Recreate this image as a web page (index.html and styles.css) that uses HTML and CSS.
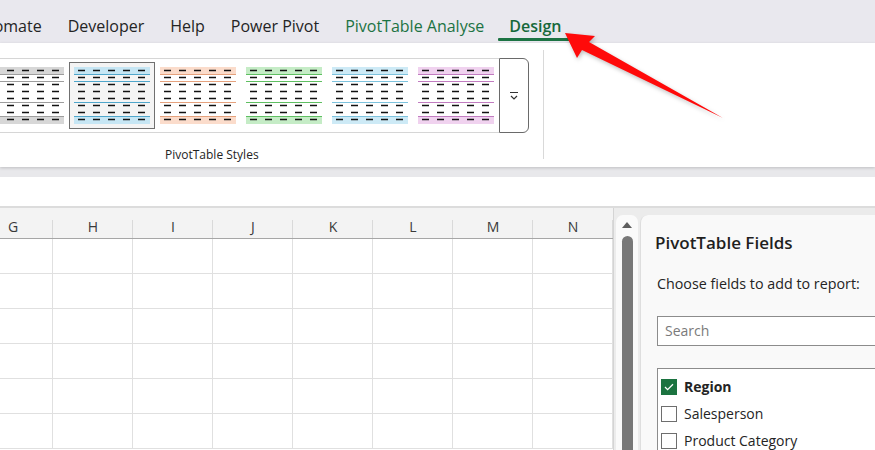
FILE: index.html
```html
<!DOCTYPE html>
<html>
<head>
<meta charset="utf-8">
<link rel="stylesheet" href="styles.css">
</head>
<body>
<svg width="0" height="0" class="defs">
  <symbol id="tstyle" viewBox="0 0 76 57">
    <rect x="0" y="0" width="76" height="7" class="band"/>
    <rect x="0" y="49" width="76" height="8" class="band"/>
    <line x1="0" x2="76" y1="7.5" y2="7.5" class="rule"/>
    <line x1="0" x2="76" y1="14.5" y2="14.5" class="rule"/>
    <line x1="0" x2="76" y1="35.5" y2="35.5" class="rule"/>
    <line x1="0" x2="76" y1="49.5" y2="49.5" class="rule"/>
    <g class="dash">
      <line x1="4" x2="72" y1="3.5" y2="3.5"/>
      <line x1="4" x2="72" y1="10.5" y2="10.5"/>
      <line x1="4" x2="72" y1="17.5" y2="17.5"/>
      <line x1="4" x2="72" y1="24.5" y2="24.5"/>
      <line x1="4" x2="72" y1="31.5" y2="31.5"/>
      <line x1="4" x2="72" y1="38.5" y2="38.5"/>
      <line x1="4" x2="72" y1="45.5" y2="45.5"/>
      <line x1="4" x2="72" y1="52.5" y2="52.5"/>
    </g>
  </symbol>
</svg>
<div class="app">
  <div class="tabs">
    <span class="tab first">Automate</span>
    <span class="tab">Developer</span>
    <span class="tab">Help</span>
    <span class="tab">Power Pivot</span>
    <span class="tab ctx">PivotTable Analyse</span>
    <span class="tab ctx active">Design</span>
  </div>

  <div class="ribbon">
    <div class="group">
      <div class="gallery">
        <div class="items">
          <div class="item"><svg class="thumb s-gray" width="76" height="57"><use href="#tstyle"/></svg></div>
          <div class="item selected"><svg class="thumb s-blue" width="76" height="57"><use href="#tstyle"/></svg></div>
          <div class="item"><svg class="thumb s-orange" width="76" height="57"><use href="#tstyle"/></svg></div>
          <div class="item"><svg class="thumb s-green" width="76" height="57"><use href="#tstyle"/></svg></div>
          <div class="item"><svg class="thumb s-sky" width="76" height="57"><use href="#tstyle"/></svg></div>
          <div class="item"><svg class="thumb s-pink" width="76" height="57"><use href="#tstyle"/></svg></div>
        </div>
        <div class="more">
          <svg width="12" height="10" viewBox="0 0 12 10"><path d="M2 1.5h8M3 5l3 3 3-3" fill="none" stroke="#333" stroke-width="1.2"/></svg>
        </div>
      </div>
      <div class="glabel">PivotTable Styles</div>
    </div>
    <div class="sep"></div>
  </div>

  <div class="band-gap"></div>
  <div class="fbar"></div>

  <div class="main">
    <div class="sheet">
      <div class="grid">
        <div class="ch">G</div><div class="ch">H</div><div class="ch">I</div><div class="ch">J</div><div class="ch">K</div><div class="ch">L</div><div class="ch">M</div><div class="ch">N</div>
        <div class="c"></div><div class="c"></div><div class="c"></div><div class="c"></div><div class="c"></div><div class="c"></div><div class="c"></div><div class="c"></div>
        <div class="c"></div><div class="c"></div><div class="c"></div><div class="c"></div><div class="c"></div><div class="c"></div><div class="c"></div><div class="c"></div>
        <div class="c"></div><div class="c"></div><div class="c"></div><div class="c"></div><div class="c"></div><div class="c"></div><div class="c"></div><div class="c"></div>
        <div class="c"></div><div class="c"></div><div class="c"></div><div class="c"></div><div class="c"></div><div class="c"></div><div class="c"></div><div class="c"></div>
        <div class="c"></div><div class="c"></div><div class="c"></div><div class="c"></div><div class="c"></div><div class="c"></div><div class="c"></div><div class="c"></div>
        <div class="c"></div><div class="c"></div><div class="c"></div><div class="c"></div><div class="c"></div><div class="c"></div><div class="c"></div><div class="c"></div>
      </div>
    </div>
    <div class="vscroll">
      <div class="track">
        <span class="up"></span>
        <div class="sthumb"></div>
      </div>
    </div>
    <div class="pane">
      <div class="ptitle">PivotTable Fields</div>
      <div class="psub">Choose fields to add to report:</div>
      <div class="search">Search</div>
      <div class="fields">
        <div class="field on"><span class="cb"><svg width="10" height="8" viewBox="0 0 10 8"><path d="M1 4l2.6 2.6L9 1.2" fill="none" stroke="#fff" stroke-width="1.3"/></svg></span><span class="fname">Region</span></div>
        <div class="field"><span class="cb"></span><span class="fname">Salesperson</span></div>
        <div class="field"><span class="cb"></span><span class="fname">Product Category</span></div>
      </div>
    </div>
  </div>

  <svg class="arrow" width="875" height="450" viewBox="0 0 875 450">
    <polygon points="565,33 595,36 589,42 723,118 582,50 577,58" fill="#ff0a0a"/>
  </svg>
</div>
</body>
</html>
```

FILE: styles.css
```css
* { box-sizing: border-box; }
html, body { margin: 0; padding: 0; }
body {
  width: 875px;
  height: 450px;
  overflow: hidden;
  font-family: "Open Sans", "Noto Sans", sans-serif;
  color: #242424;
  background: #fff;
}
.defs { position: absolute; }
.app {
  position: relative;
  width: 875px;
  height: 450px;
  overflow: hidden;
  display: flex;
  flex-direction: column;
}

/* tabs */
.tabs {
  height: 43px;
  flex: 0 0 43px;
  background: #e9e8ee;
  display: flex;
  align-items: stretch;
  margin-left: -45px;
  white-space: nowrap;
}
.tab {
  font-size: 16px;
  padding: 16px 13px 0;
  line-height: 20px;
  color: #242424;
  position: relative;
}
.tab.ctx { color: #1c7343; }
.tab.active {
  font-weight: 600;
  color: #16683a;
  padding: 16px 11px 0;
  margin-left: 1px;
}
.tab.active::after {
  content: "";
  position: absolute;
  left: 0;
  right: 0;
  top: 38px;
  height: 3px;
  border-radius: 1px;
  background: #1c7343;
}

/* ribbon */
.ribbon {
  flex: 0 0 124px;
  height: 124px;
  background: #fff;
  display: flex;
  align-items: flex-start;
  box-shadow: 0 1px 3px rgba(0,0,0,.18);
  position: relative;
  z-index: 1;
}
.group {
  display: flex;
  flex-direction: column;
  margin-top: 15px;
  margin-left: -17px;
}
.gallery {
  display: flex;
  height: 75px;
}
.items {
  display: flex;
  border-top: 1px solid #d6d6d6;
  border-bottom: 1px solid #d6d6d6;
  padding-top: 3px;
  height: 75px;
}
.item {
  width: 86px;
  height: 67px;
  padding: 4px;
  border: 1px solid transparent;
}
.item.selected {
  border-color: #707070;
  background: #f4f4f4;
}
.thumb { display: block; }
.band { fill: var(--band); }
.rule { stroke: var(--rule); stroke-width: 1; }
.dash line { stroke: #111; stroke-width: 1.3; stroke-dasharray: 7 8; }
.s-gray { --band: #d7d7d7; --rule: #9d9d9d; }
.s-blue { --band: #c6e6f4; --rule: #4fa6cb; }
.s-orange { --band: #fbdccb; --rule: #e5a17c; }
.s-green { --band: #c5ecc6; --rule: #5ebf61; }
.s-sky { --band: #cdeaf6; --rule: #7cc2dd; }
.s-pink { --band: #f0d2ef; --rule: #c17bc0; }

.more {
  width: 30px;
  height: 75px;
  border: 1px solid #6a6a6a;
  border-radius: 0 6px 6px 0;
  display: flex;
  align-items: center;
  justify-content: center;
  background: #fff;
}
.glabel {
  font-size: 12px;
  color: #242424;
  padding-left: 182px;
  margin-top: 14px;
  line-height: 16px;
}
.sep {
  width: 1px;
  height: 109px;
  background: #d9d9d9;
  margin-top: 7px;
  margin-left: 14px;
}

.band-gap {
  flex: 0 0 10px;
  background: #e8e8eb;
}
.fbar {
  flex: 0 0 31px;
  background: #fff;
  border-bottom: 2px solid #dcdcdc;
}

/* main */
.main {
  flex: 1;
  display: flex;
  background: #ebebeb;
  min-height: 0;
}
.sheet {
  flex: 0 0 613px;
  overflow: hidden;
  background: #fff;
}
.grid {
  margin-left: -27px;
  display: grid;
  grid-template-columns: repeat(8, 80px);
  grid-template-rows: 31px;
  grid-auto-rows: 35px;
  width: 640px;
}
.ch {
  background: #f3f3f3;
  border-bottom: 1px solid #a6a6a6;
  font-size: 14px;
  color: #3a3a3a;
  text-align: center;
  line-height: 16px;
  padding-top: 11px;
  position: relative;
}
.ch::after {
  content: "";
  position: absolute;
  right: 0;
  top: 12px;
  bottom: 0;
  width: 1px;
  background: #d9d9d9;
}
.c {
  border-right: 1px solid #e0e0e0;
  border-bottom: 1px solid #e0e0e0;
}

.vscroll {
  flex: 0 0 27px;
  border-left: 1px solid #d4d4d4;
  padding: 7px 2px 0 2px;
  background: #ececec;
}
.track {
  height: 100%;
  background: #fafafa;
  border-radius: 7px 7px 0 0;
  display: flex;
  flex-direction: column;
  align-items: center;
  padding-top: 7px;
}
.up {
  width: 0;
  height: 0;
  border-left: 5px solid transparent;
  border-right: 5px solid transparent;
  border-bottom: 6px solid #5e5e5e;
}
.sthumb {
  width: 11px;
  flex: 1;
  margin-top: 8px;
  background: #787878;
  border-radius: 6px 6px 0 0;
}

.pane {
  flex: 1;
  margin-top: 7px;
  background: #f9f9f9;
  border-left: 1px solid #dedede;
  border-radius: 8px 0 0 0;
  padding: 16px 0 0 14px;
}
.ptitle {
  font-size: 17px;
  font-weight: 600;
  color: #1f1f1f;
  line-height: 24px;
}
.psub {
  font-size: 14.3px;
  color: #242424;
  margin-top: 19px;
  margin-left: 2px;
  line-height: 20px;
}
.search {
  margin-top: 22px;
  margin-left: 2px;
  height: 30px;
  border: 1px solid #8c8c8c;
  border-right: none;
  background: #fff;
  font-size: 14px;
  color: #7a7a7a;
  padding: 4px 7px;
  line-height: 20px;
}
.fields {
  margin-top: 22px;
  margin-left: 2px;
  border: 1px solid #8c8c8c;
  border-right: none;
  border-bottom: none;
  background: #fff;
  padding: 4px 0 0 3px;
  height: 120px;
}
.field {
  display: flex;
  align-items: center;
  height: 27px;
  font-size: 14px;
}
.cb {
  width: 16px;
  height: 16px;
  border: 1px solid #6e6e6e;
  background: #fff;
  display: flex;
  align-items: center;
  justify-content: center;
  margin-right: 7px;
}
.field.on .cb {
  background: #1b7340;
  border-color: #1b7340;
}
.field.on .fname { font-weight: 700; }

.arrow {
  position: absolute;
  left: 0;
  top: 0;
  z-index: 5;
  pointer-events: none;
  filter: drop-shadow(1px 2px 2px rgba(0,0,0,.25));
}
```
